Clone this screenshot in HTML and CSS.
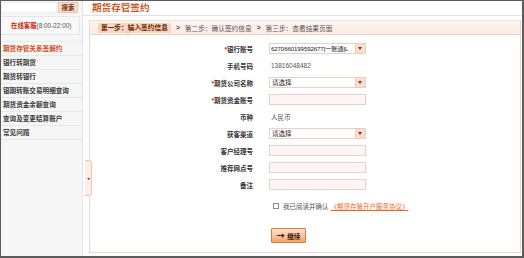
FILE: index.html
```html
<!DOCTYPE html>
<html lang="zh-CN">
<head>
    <meta charset="UTF-8">
    <title>期货存管签约</title>
    <link rel="stylesheet" href="styles.css">
</head>
<body>
    <div class="frame">
        <aside class="sidebar">
            <div class="search">
                <span class="search-input"></span>
                <button class="search-btn">搜索</button>
            </div>
            <div class="service"><span class="service-name">在线客服</span>(8:00-22:00)</div>
            <ul class="menu">
                <li class="active">期货存管关系签解约</li>
                <li>银行转期货</li>
                <li>期货转银行</li>
                <li>银期转账交易明细查询</li>
                <li>期货资金余额查询</li>
                <li>查询及变更结算账户</li>
                <li>常见问题</li>
            </ul>
        </aside>
        <div class="toggle">&#9666;</div>
        <main class="main">
            <h1 class="page-title">期货存管签约</h1>
            <div class="panel">
                <div class="steps">
                    <span class="step current">第一步：输入签约信息</span>
                    <span class="sep">&gt;</span>
                    <span class="step">第二步：确认签约信息</span>
                    <span class="sep">&gt;</span>
                    <span class="step">第三步：查看结果页面</span>
                </div>
                <form class="form">
                    <div class="row">
                        <label><i>*</i>银行账号</label>
                        <div class="select"><span class="select-value account">6270660199592677[一账通]L</span><span class="select-btn"></span></div>
                    </div>
                    <div class="row">
                        <label>手机号码</label>
                        <span class="value">13816048482</span>
                    </div>
                    <div class="row">
                        <label><i>*</i>期货公司名称</label>
                        <div class="select"><span class="select-value">请选择</span><span class="select-btn"></span></div>
                    </div>
                    <div class="row">
                        <label><i>*</i>期货资金账号</label>
                        <span class="input"></span>
                    </div>
                    <div class="row">
                        <label>币种</label>
                        <span class="value">人民币</span>
                    </div>
                    <div class="row">
                        <label>获客渠道</label>
                        <div class="select"><span class="select-value">请选择</span><span class="select-btn"></span></div>
                    </div>
                    <div class="row">
                        <label>客户经理号</label>
                        <span class="input"></span>
                    </div>
                    <div class="row">
                        <label>推荐网点号</label>
                        <span class="input"></span>
                    </div>
                    <div class="row">
                        <label>备注</label>
                        <span class="input"></span>
                    </div>
                    <div class="agree">
                        <span class="checkbox"></span>
                        <span>我已阅读并确认</span>
                        <a class="agree-link">《期货存管开户服务协议》</a>
                    </div>
                    <div class="actions">
                        <button type="button" class="next-btn"><b>&#8594;</b> 继续</button>
                    </div>
                </form>
            </div>
        </main>
    </div>
</body>
</html>
```

FILE: styles.css
```css
:root {
    --brand: #cc5620;
    --line: #e4e4e4;
    --pink-line: #efd8ca;
    --pink-bg: #fcefe8;
    --text: #333;
}
* {
    box-sizing: border-box;
}
body {
    margin: 0;
    width: 524px;
    height: 258px;
    overflow: hidden;
    background: #fff;
    font-family: "Liberation Sans", "Noto Sans CJK SC", sans-serif;
    color: var(--text);
}
.frame {
    position: relative;
    display: flex;
    width: 524px;
    height: 258px;
    border-style: solid;
    border-color: #5c5c5c;
    border-width: 1px 2px 2px 1px;
}
.sidebar {
    width: 82px;
    background: #f6f6f6;
    border-right: 1px solid var(--line);
    padding-top: 1px;
}
.search {
    display: flex;
    height: 11px;
}
.search-input {
    width: 56px;
    background: #fff;
    border: 1px solid #efefef;
}
.search-btn {
    width: 20px;
    margin-left: 1px;
    padding: 0;
    border: 1px solid #e9c2ae;
    background: #f8dfd2;
    color: #7a3410;
    font: bold 6.5px "Noto Sans CJK SC", sans-serif;
    line-height: 9px;
}
.service {
    margin: 3px 2px 0 0;
    height: 19px;
    line-height: 18px;
    padding-left: 10px;
    border: 1px solid #e6e6e6;
    border-left: none;
    background: #f8f8f8;
    font-size: 6.4px;
    color: #555;
}
.service-name {
    color: #d02a0c;
    font-weight: bold;
}
.menu {
    list-style: none;
    margin: 6px 0 0;
    padding: 0;
    border-top: 1px solid #ececec;
}
.menu li {
    height: 14px;
    line-height: 13px;
    padding-left: 2px;
    border-bottom: 1px solid #e8e8e8;
    font-size: 6.6px;
    font-weight: bold;
    color: #3a3a3a;
}
.menu li.active {
    color: #d04a18;
}
.toggle {
    position: absolute;
    left: 84px;
    top: 159px;
    width: 7px;
    height: 36px;
    border: 1px solid #f0c8b2;
    border-left: none;
    border-radius: 0 3px 3px 0;
    background: #fcefe8;
    color: #6a3a2a;
    font-size: 5px;
    line-height: 34px;
    text-align: center;
}
.main {
    flex: 1;
    display: flex;
    flex-direction: column;
}
.page-title {
    margin: 0;
    height: 15px;
    padding-left: 9px;
    border-bottom: 1px solid #e2e2e2;
    font-size: 9.6px;
    line-height: 12px;
    color: var(--brand);
    font-family: "Noto Sans CJK SC", sans-serif;
    font-weight: bold;
}
.panel {
    flex: 1;
    margin: 4px 1px 3px 6px;
    border: 1px solid var(--pink-line);
    border-top-color: #eee3dc;
}
.steps {
    display: flex;
    align-items: center;
    height: 14px;
    padding-left: 8px;
    background: linear-gradient(#fdf5f0, #fbece4);
    border-bottom: 1px solid #e6d6ca;
    font-size: 6.7px;
    color: #555;
}
.step {
    white-space: nowrap;
}
.step.current {
    position: relative;
    height: 10px;
    line-height: 10px;
    padding: 0 3px;
    background: #f8d6c3;
    color: #6a2400;
    font-weight: bold;
}
.step.current::after {
    content: "";
    position: absolute;
    left: 27px;
    bottom: -3px;
    border: 3px solid transparent;
    border-top-color: #f8d6c3;
    border-bottom: none;
}
.sep {
    margin: 0 5px;
    color: #444;
    font-weight: bold;
}
.form {
    padding-top: 5px;
    font-size: 6.5px;
}
.row {
    display: flex;
    align-items: center;
    height: 17px;
}
.row label {
    width: 164px;
    text-align: right;
    padding-right: 1px;
    margin-right: 15px;
    font-weight: bold;
    color: #333;
}
.row label i {
    font-style: normal;
    color: #e0201a;
}
.value {
    padding-left: 2px;
    color: #555;
}
.select,
.input {
    display: flex;
    width: 97px;
    height: 11px;
    border: 1px solid #ebcfc0;
}
.select {
    background: #fff;
}
.input {
    background: #fdf6f2;
}
.select-value {
    flex: 1;
    overflow: hidden;
    white-space: nowrap;
    padding-left: 2px;
    line-height: 9px;
    color: #222;
}
.select-value.account {
    padding-left: 1px;
    font-size: 6.1px;
    letter-spacing: -0.1px;
}
.select-btn {
    position: relative;
    width: 10px;
    border-left: 1px solid #ebcfc0;
    background: #f9ddd0;
}
.select-btn::after {
    content: "";
    position: absolute;
    left: 2px;
    top: 3px;
    border: 2.5px solid transparent;
    border-top: 3px solid #8a3418;
    border-bottom: none;
}
.agree {
    display: flex;
    align-items: center;
    height: 17px;
    margin-top: 4px;
    padding-left: 183px;
    color: #555;
}
.checkbox {
    width: 6px;
    height: 6px;
    margin-right: 4px;
    border: 1px solid #7d8da6;
    background: #fff;
}
.agree-link {
    margin-left: 2px;
    color: #e86a1a;
    text-decoration: underline;
}
.actions {
    margin-top: 14px;
    padding-left: 181px;
}
.next-btn {
    width: 35px;
    height: 15px;
    padding: 0;
    border: 1px solid #e0783a;
    border-radius: 1px;
    background: linear-gradient(#fde4d2, #f6a26c);
    color: #3a1800;
    font: bold 6.6px "Noto Sans CJK SC", sans-serif;
    line-height: 13px;
}
.next-btn b {
    font-size: 8px;
    margin-right: 1px;
}
```
